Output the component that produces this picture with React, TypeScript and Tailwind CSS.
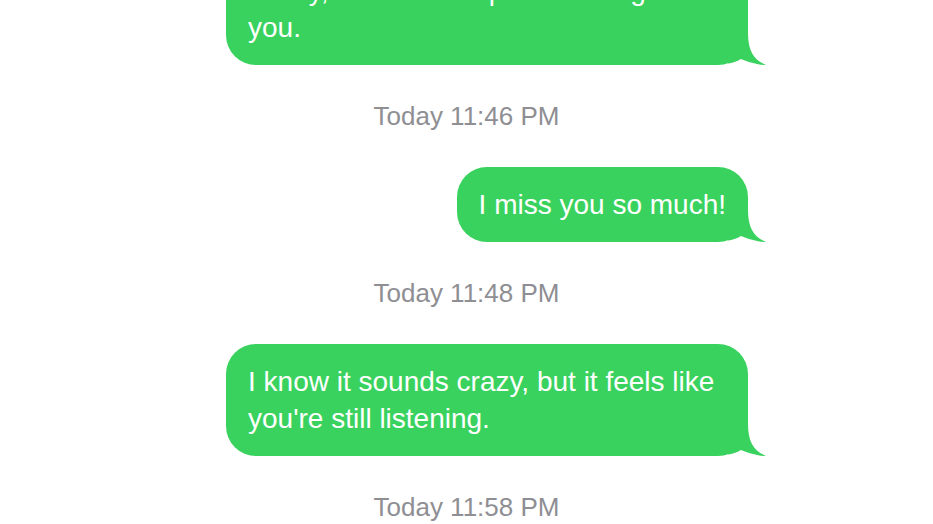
import React from 'react';

type Item =
  | { kind: 'bubble'; text: string }
  | { kind: 'time'; text: string };

const items: Item[] = [
  { kind: 'bubble', text: 'Lately, I still wake up half talking to you.' },
  { kind: 'time', text: 'Today 11:46 PM' },
  { kind: 'bubble', text: 'I miss you so much!' },
  { kind: 'time', text: 'Today 11:48 PM' },
  { kind: 'bubble', text: "I know it sounds crazy, but it feels like you're still listening." },
  { kind: 'time', text: 'Today 11:58 PM' },
];

// little curl at the bottom-right of each sent bubble
const Tail = () => (
  <svg
    className="absolute right-[-18px] bottom-0"
    width="38"
    height="40"
    viewBox="0 0 38 40"
  >
    <path
      d="M0 0 H20 V8 C20 26 26 35 38 40 C30 40 20 37 13 34 C9 36.5 4 38.3 0 38.4 Z"
      fill="#3ad25e"
    />
  </svg>
);

const Bubble: React.FC<{ text: string }> = ({ text }) => (
  <div className="flex justify-end pr-[185px]">
    <div className="relative max-w-[522px] rounded-[30px] bg-[#3ad25e] px-[22px] py-[19px] text-[28px] leading-[37px] text-white">
      <span className="relative z-10">{text}</span>
      <Tail />
    </div>
  </div>
);

export default function App() {
  return (
    <div className="h-[524px] w-full overflow-hidden bg-white font-['Liberation_Sans',Arial,sans-serif]">
      <div className="mt-[-47px] flex flex-col">
        {items.map((it, i) =>
          it.kind === 'bubble' ? (
            <Bubble key={i} text={it.text} />
          ) : (
            <div key={i} className="flex h-[102px] items-center justify-center text-[26px] text-[#8e8e93]">
              {it.text}
            </div>
          )
        )}
      </div>
    </div>
  );
}
